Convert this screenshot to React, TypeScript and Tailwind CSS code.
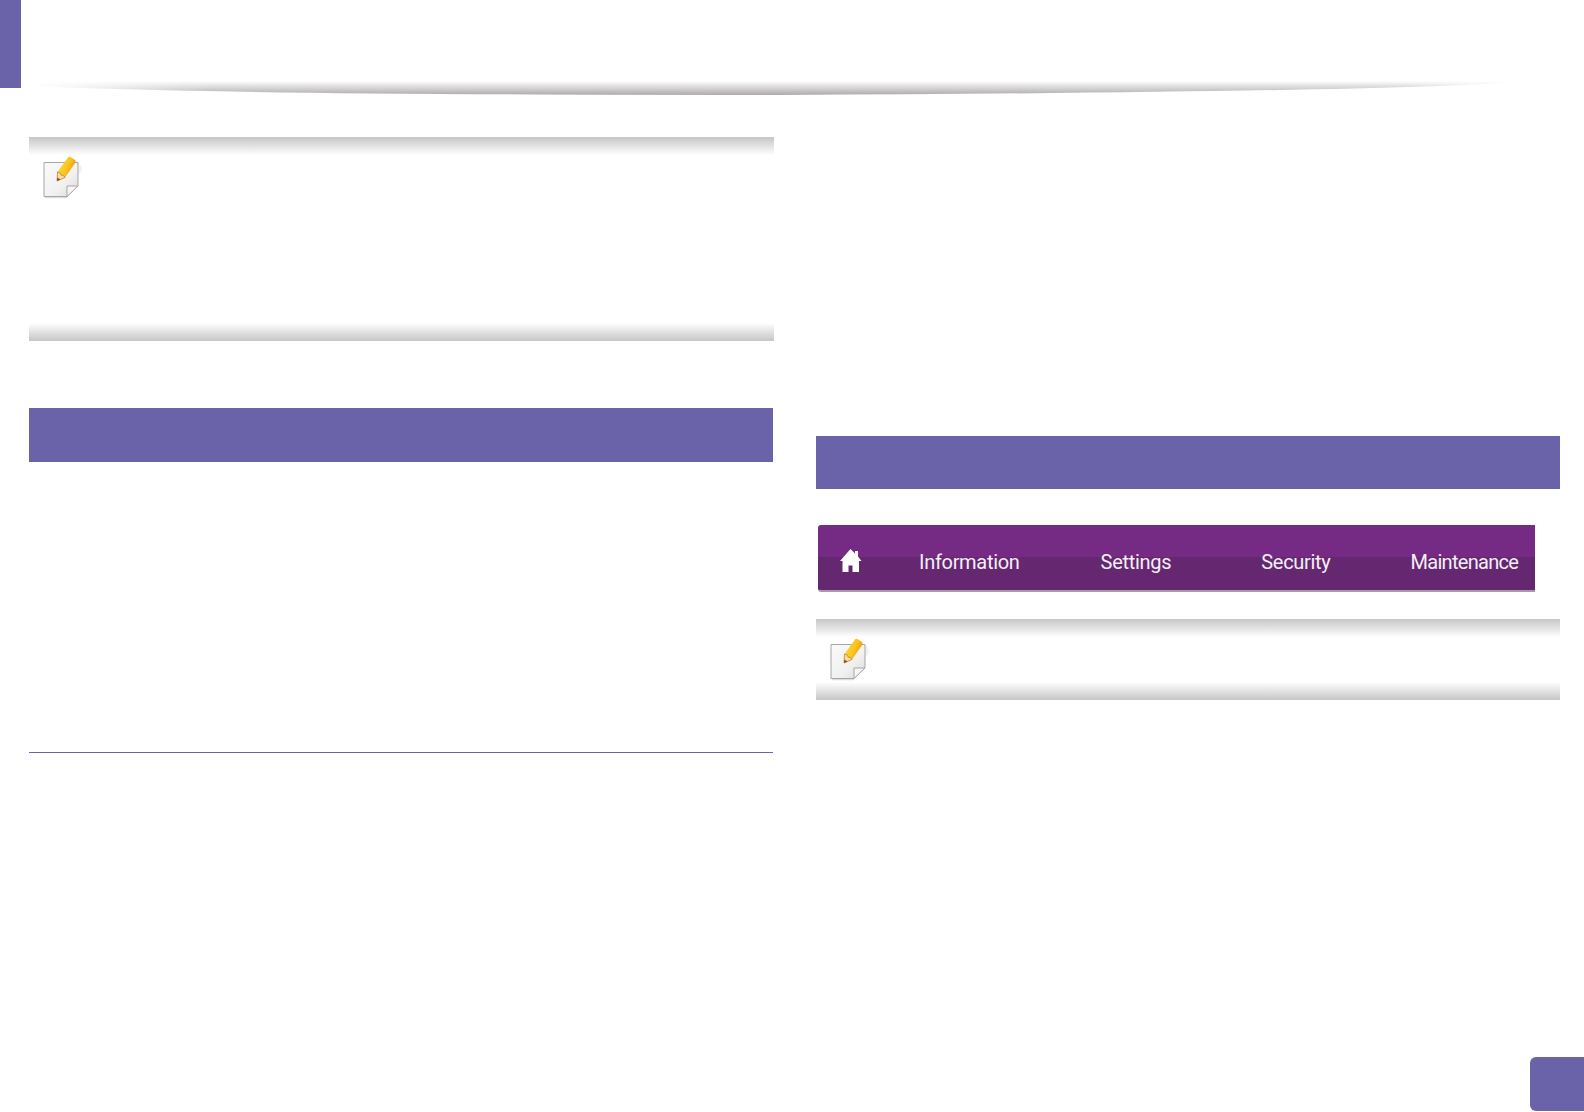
const NoteIcon = () => (
  <svg width="40" height="44" viewBox="0 0 40 44" className="block">
    <defs>
      <linearGradient id="sheet" x1="0" y1="0" x2="1" y2="1">
        <stop offset="0" stopColor="#fafafa" />
        <stop offset="0.6" stopColor="#f1f1f1" />
        <stop offset="1" stopColor="#d8d8d8" />
      </linearGradient>
      <linearGradient id="pencil" x1="0" y1="0" x2="1" y2="0.5">
        <stop offset="0" stopColor="#fde02f" />
        <stop offset="0.6" stopColor="#fbc51f" />
        <stop offset="1" stopColor="#ec9412" />
      </linearGradient>
    </defs>
    <circle cx="33" cy="13" r="6" fill="#ececec" opacity="0.7" />
    <path d="M2 41.5H24" fill="none" stroke="#dcdcdc" strokeWidth="1.5" />
    <path d="M1 6.5H35V29.5L24 40.5H1Z" fill="url(#sheet)" stroke="#a6a6a6" strokeWidth="1" />
    <path d="M24 40.5V30H35Z" fill="#f6f6f6" stroke="#a6a6a6" strokeWidth="1" />
    <path d="M14 25L14.5 16L25 1.5Q26 0.5 27.5 1L32 4Q33 5 32.5 6.5L22 21.5Z" fill="url(#pencil)" />
    <path d="M14 25L14.5 16Q18 16 18 19Q21 19 22 21.5Z" fill="#f6dcae" stroke="#c07a1c" strokeWidth="0.7" />
    <path d="M14 25L14.3 21.5L17.5 23.5Z" fill="#8a4f10" />
  </svg>
);

const Note = ({ height }: { height: string }) => (
  <div className={`flex flex-col justify-between relative ${height}`}>
    <div className="h-[18px] bg-gradient-to-b from-[#c6c6c6] to-white" />
    <div className="h-[18px] bg-gradient-to-b from-white to-[#c6c6c6]" />
    <div className="absolute left-[14px] top-[19px]">
      <NoteIcon />
    </div>
  </div>
);

const navLabel = "text-[20px] leading-none text-[#f6eef8] whitespace-nowrap pt-[8px] shrink-0";

export default function App() {
  return (
    <div className="w-[1584px] h-[1112px] bg-white overflow-hidden relative font-['Roboto',sans-serif]">
      <div className="flex items-start">
        <div className="w-[21px] h-[88px] bg-[#6a63a9]" />
        <svg width="1500" height="18" viewBox="0 0 1500 18" className="mt-[78px] ml-[8px] block">
          <defs>
            <linearGradient id="swooshFill" gradientUnits="userSpaceOnUse" x1="0" y1="3" x2="0" y2="17">
              <stop offset="0" stopColor="#ffffff" />
              <stop offset="1" stopColor="#aeaaaa" />
            </linearGradient>
            <linearGradient id="swooshFade" x1="0" y1="0" x2="1" y2="0">
              <stop offset="0" stopColor="#000000" />
              <stop offset="0.12" stopColor="#ffffff" />
              <stop offset="0.92" stopColor="#ffffff" />
              <stop offset="1" stopColor="#000000" />
            </linearGradient>
            <mask id="swooshMask">
              <rect width="1500" height="18" fill="url(#swooshFade)" />
            </mask>
          </defs>
          <path d="M0 0H1492V4Q1350 14 750 17Q200 17 0 8Z" fill="url(#swooshFill)" mask="url(#swooshMask)" />
        </svg>
      </div>
      <div className="flex pl-[29px] gap-[42px]">
        <div className="w-[745px]">
          <div className="mt-[41px]">
            <Note height="h-[204px]" />
          </div>
          <div className="mt-[67px] h-[54px] w-[744px] bg-[#6a63a9]" />
          <div className="mt-[290px] h-px w-[744px] bg-[#6a63a9]" />
        </div>
        <div className="w-[744px]">
          <div className="mt-[340px] h-[53px] bg-[#6a63a9]" />
          <div className="mt-[36px] ml-[2px] w-[717px] h-[67px] rounded-l-[3px] border-b-2 border-[#a49aa8] bg-gradient-to-b from-[#752b83] from-50% to-[#652870] to-50% flex items-center pl-[22px]">
            <svg width="22" height="24" viewBox="0 0 22 24" className="block shrink-0 mt-[7px]">
              <path d="M10.5 0L15 4.5V2H18V7.5L21.5 12H19V23H12.5V16.5H8.5V23H2.5V12H0Z" fill="#ffffff" />
            </svg>
            <span className={`${navLabel} tracking-[-0.3px] ml-[57px]`}>Information</span>
            <span className={`${navLabel} tracking-[-0.3px] ml-[81px]`}>Settings</span>
            <span className={`${navLabel} tracking-[-0.3px] ml-[90px]`}>Security</span>
            <span className={`${navLabel} tracking-[-0.7px] ml-[80px]`}>Maintenance</span>
          </div>
          <div className="mt-[27px]">
            <Note height="h-[81px]" />
          </div>
        </div>
      </div>
      <div className="absolute left-[1530px] top-[1057px] w-[54px] h-[54px] rounded-l-[6px] bg-[#6a63a9]" />
    </div>
  );
}
